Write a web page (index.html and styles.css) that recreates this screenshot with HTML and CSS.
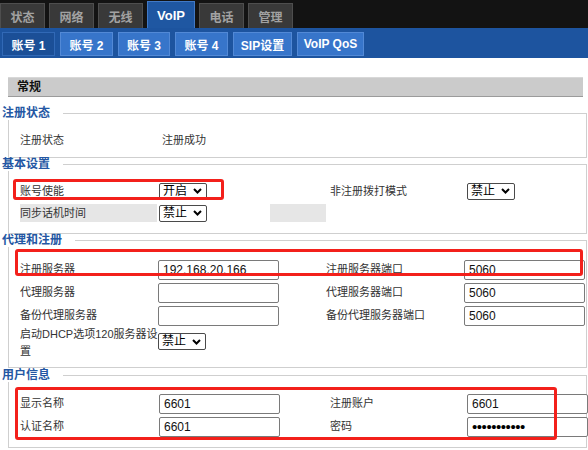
FILE: index.html
```html
<!DOCTYPE html>
<html lang="zh-CN">
<head>
<meta charset="utf-8">
<title>VoIP 账号 1</title>
<link rel="stylesheet" href="styles.css">
</head>
<body>
<div class="page">
  <div class="topbar">
    <div class="tab">状态</div>
    <div class="tab">网络</div>
    <div class="tab">无线</div>
    <div class="tab active">VoIP</div>
    <div class="tab">电话</div>
    <div class="tab">管理</div>
  </div>
  <div class="subbar">
    <div class="stab active">账号 1</div>
    <div class="stab">账号 2</div>
    <div class="stab narrow">账号 3</div>
    <div class="stab">账号 4</div>
    <div class="stab sip">SIP设置</div>
    <div class="stab qos">VoIP QoS</div>
  </div>

  <div class="content">
    <div class="gbar">常规</div>

    <div class="sec first">
      <div class="sec-head"><span class="sec-title">注册状态</span><span class="sec-line"></span></div>
      <div class="sec-body b1">
        <div class="row cols-s1 h20">
          <span class="lbl">注册状态</span>
          <span class="lbl val">注册成功</span>
        </div>
      </div>
    </div>

    <div class="sec">
      <div class="sec-head"><span class="sec-title">基本设置</span><span class="sec-line"></span></div>
      <div class="sec-body b2">
        <div class="row cols-a h20">
          <span class="lbl">账号使能</span>
          <div class="sel"><span>开启</span><svg class="chev" width="9" height="6" viewBox="0 0 9 6"><path d="M1 1l3.5 3.5L8 1" fill="none" stroke="#000" stroke-width="2"/></svg></div>
          <span class="lbl">非注册拨打模式</span>
          <div class="sel"><span>禁止</span><svg class="chev" width="9" height="6" viewBox="0 0 9 6"><path d="M1 1l3.5 3.5L8 1" fill="none" stroke="#000" stroke-width="2"/></svg></div>
        </div>
        <div class="row cols-a h20 gap2">
          <span class="lbl shade">同步话机时间</span>
          <div class="cellflex">
            <div class="sel"><span>禁止</span><svg class="chev" width="9" height="6" viewBox="0 0 9 6"><path d="M1 1l3.5 3.5L8 1" fill="none" stroke="#000" stroke-width="2"/></svg></div>
            <div class="shade-box"></div>
          </div>
          <span></span>
          <span></span>
        </div>
      </div>
    </div>

    <div class="sec">
      <div class="sec-head"><span class="sec-title">代理和注册</span><span class="sec-line"></span></div>
      <div class="sec-body b3">
        <div class="row cols-b h23">
          <span class="lbl">注册服务器</span>
          <div class="inp">192.168.20.166</div>
          <span class="lbl">注册服务器端口</span>
          <div class="inp">5060</div>
        </div>
        <div class="row cols-b h23">
          <span class="lbl">代理服务器</span>
          <div class="inp"></div>
          <span class="lbl">代理服务器端口</span>
          <div class="inp">5060</div>
        </div>
        <div class="row cols-b h23">
          <span class="lbl">备份代理服务器</span>
          <div class="inp"></div>
          <span class="lbl">备份代理服务器端口</span>
          <div class="inp">5060</div>
        </div>
        <div class="row cols-b tall">
          <span class="lbl wrap">启动DHCP选项120服务器设置</span>
          <div class="sel top"><span>禁止</span><svg class="chev" width="9" height="6" viewBox="0 0 9 6"><path d="M1 1l3.5 3.5L8 1" fill="none" stroke="#000" stroke-width="2"/></svg></div>
          <span></span>
          <span></span>
        </div>
      </div>
    </div>

    <div class="sec last">
      <div class="sec-head"><span class="sec-title">用户信息</span><span class="sec-line"></span></div>
      <div class="sec-body b4">
        <div class="row cols-a h23">
          <span class="lbl">显示名称</span>
          <div class="inp">6601</div>
          <span class="lbl">注册账户</span>
          <div class="inp">6601</div>
        </div>
        <div class="row cols-a h23">
          <span class="lbl">认证名称</span>
          <div class="inp">6601</div>
          <span class="lbl">密码</span>
          <div class="inp pw">•••••••••••</div>
        </div>
      </div>
    </div>
  </div>

  <div class="mark m1"></div>
  <div class="mark m2"></div>
  <div class="mark m3"></div>
</div>
</body>
</html>
```

FILE: styles.css
```css
html, body {
  margin: 0;
  padding: 0;
  background: #fff;
  overflow: hidden;
}
body {
  font-family: "Liberation Sans", "Noto Sans CJK SC", sans-serif;
  font-size: 11px;
  color: #333;
}
.page {
  position: relative;
  width: 588px;
  height: 450px;
  overflow: hidden;
}

/* top tabs */
.topbar {
  height: 28px;
  background: #131313;
  display: flex;
  align-items: flex-end;
  gap: 4px;
}
.tab {
  box-sizing: border-box;
  width: 45px;
  height: 25px;
  background: #393939;
  border: 1px solid #4e4e4e;
  border-bottom: none;
  color: #a2a2a2;
  font-weight: bold;
  font-size: 12px;
  display: flex;
  align-items: center;
  justify-content: center;
}
.tab.active {
  width: 48px;
  height: 27px;
  background: #1f57a2;
  border-color: #4179c6;
  color: #fff;
  font-size: 13px;
}

/* sub tabs */
.subbar {
  box-sizing: border-box;
  height: 30px;
  background: #1d549f;
  display: flex;
  gap: 5px;
  padding: 4px 0 0 2px;
}
.stab {
  box-sizing: border-box;
  width: 53px;
  height: 24px;
  background: #3775ca;
  border: 1px solid #5289d6;
  color: #fff;
  font-weight: bold;
  font-size: 12px;
  display: flex;
  align-items: center;
  justify-content: center;
  white-space: nowrap;
}
.stab.active {
  background: #1b4f97;
  border-color: #3169b6;
}
.stab.narrow { width: 52px; }
.stab.sip { width: 59px; }
.stab.qos { width: 67px; }

/* content */
.content {
  padding-top: 19px;
}
.gbar {
  box-sizing: border-box;
  height: 20px;
  margin: 0 5px 0 8px;
  background: #cbcbcb;
  border-top: 1px solid #d8d8d8;
  border-bottom: 1px solid #9b9b9b;
  font-size: 12px;
  font-weight: bold;
  color: #111;
  padding-left: 9px;
  line-height: 18px;
}

.sec.first { margin-top: 10px; }
.sec.last { margin-top: 1px; }
.sec-head {
  display: flex;
  height: 13px;
  padding-left: 2px;
}
.sec-title {
  font-size: 12px;
  font-weight: bold;
  color: #2457a3;
  line-height: 13px;
  white-space: nowrap;
}
.sec-line {
  flex: 1;
  margin: 6px 1px 0 13px;
  border-top: 1px solid #cfcfcf;
  border-right: 1px solid #cfcfcf;
}
.sec-body {
  margin: 0 1px 0 8px;
  border: 1px solid #cfcfcf;
  border-top: none;
  padding-left: 11px;
}
.b1 { padding-top: 10px; padding-bottom: 7px; }
.b2 { padding-top: 10px; padding-bottom: 10px; }
.b3 { padding-top: 11px; padding-bottom: 6px; }
.b4 { padding-top: 10px; padding-bottom: 9px; }

/* rows */
.row {
  display: grid;
  align-items: center;
}
.cols-s1 { grid-template-columns: 142px 1fr; }
.cols-a { grid-template-columns: 139px 171px 137px 1fr; }
.cols-b { grid-template-columns: 138px 168px 138px 1fr; }
.h20 { height: 20px; }
.h23 { height: 23px; }
.gap2 { margin-top: 2px; }
.tall {
  height: 34px;
  align-items: start;
}

.lbl {
  font-size: 11px;
  line-height: 17px;
  color: #333;
  white-space: nowrap;
}
.lbl.wrap {
  white-space: normal;
  width: 140px;
  margin-top: -1px;
}
.lbl.shade {
  background: #e6e6e6;
  width: 137px;
  height: 18px;
  line-height: 18px;
}
.cellflex {
  display: flex;
  align-items: center;
}
.shade-box {
  width: 56px;
  height: 18px;
  background: #e6e6e6;
  margin-left: 63px;
}

.sel {
  box-sizing: border-box;
  width: 48px;
  height: 17px;
  border: 1px solid #4a4a4a;
  border-radius: 2px;
  display: flex;
  align-items: center;
  padding: 0 4px 0 3px;
  font-size: 12px;
  line-height: 15px;
  color: #000;
  background: #fff;
}
.sel.top { margin-top: 6px; }
.chev { margin-left: auto; display: block; }

.inp {
  box-sizing: border-box;
  width: 121px;
  height: 20px;
  border: 1px solid #7a7a7a;
  border-radius: 2px;
  padding-left: 4px;
  font-family: "Liberation Sans", sans-serif;
  font-size: 12px;
  line-height: 18px;
  color: #111;
  background: #fff;
  white-space: nowrap;
  overflow: hidden;
}
.inp.pw {
  font-size: 15px;
  letter-spacing: -0.45px;
  color: #000;
}

/* annotation boxes drawn over the form */
.mark {
  position: absolute;
  box-sizing: border-box;
  border: 3px solid #f3201b;
  border-radius: 3px;
  pointer-events: none;
}
.m1 { left: 13px; top: 179px; width: 211px; height: 21px; }
.m2 { left: 15px; top: 249px; width: 568px; height: 27px; }
.m3 { left: 15px; top: 387px; width: 542px; height: 53px; }
```
